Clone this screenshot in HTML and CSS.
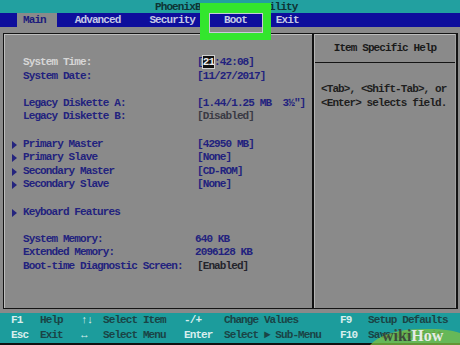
FILE: index.html
```html
<!DOCTYPE html>
<html>

<head>
    <title>PhoenixBIOS Setup Utility</title>
    <link rel="stylesheet" href="styles.css">
</head>

<body>
    <div class="title">PhoenixBIOS Setup Utility</div>

    <div class="menu">
        <span class="tab active">Main</span>
        <span class="tab">Advanced</span>
        <span class="tab">Security</span>
        <span class="tab">Boot</span>
        <span class="tab">Exit</span>
    </div>

    <div class="screen">
        <div class="panel">
            <div class="settings">
                <div class="row">
                    <span class="mark"></span>
                    <span class="label light">System Time:</span>
                    <span class="value">[<span class="cursor">21</span>:42:08]</span>
                </div>
                <div class="row">
                    <span class="mark"></span>
                    <span class="label">System Date:</span>
                    <span class="value">[11/27/2017]</span>
                </div>
                <div class="blank"></div>
                <div class="row">
                    <span class="mark"></span>
                    <span class="label">Legacy Diskette A:</span>
                    <span class="value">[1.44/1.25 MB&nbsp; 3½"]</span>
                </div>
                <div class="row">
                    <span class="mark"></span>
                    <span class="label">Legacy Diskette B:</span>
                    <span class="value dim">[Disabled]</span>
                </div>
                <div class="blank"></div>
                <div class="row">
                    <span class="mark sub"></span>
                    <span class="label">Primary Master</span>
                    <span class="value">[42950 MB]</span>
                </div>
                <div class="row">
                    <span class="mark sub"></span>
                    <span class="label">Primary Slave</span>
                    <span class="value">[None]</span>
                </div>
                <div class="row">
                    <span class="mark sub"></span>
                    <span class="label">Secondary Master</span>
                    <span class="value">[CD-ROM]</span>
                </div>
                <div class="row">
                    <span class="mark sub"></span>
                    <span class="label">Secondary Slave</span>
                    <span class="value">[None]</span>
                </div>
                <div class="blank"></div>
                <div class="row">
                    <span class="mark sub"></span>
                    <span class="label">Keyboard Features</span>
                    <span class="value"></span>
                </div>
                <div class="blank"></div>
                <div class="row">
                    <span class="mark"></span>
                    <span class="label">System Memory:</span>
                    <span class="value info">640 KB</span>
                </div>
                <div class="row">
                    <span class="mark"></span>
                    <span class="label">Extended Memory:</span>
                    <span class="value info">2096128 KB</span>
                </div>
                <div class="row">
                    <span class="mark"></span>
                    <span class="label">Boot-time Diagnostic Screen:</span>
                    <span class="value dark">[Enabled]</span>
                </div>
            </div>

            <div class="help">
                <div class="help-head">Item Specific Help</div>
                <div class="help-body">
                    &lt;Tab&gt;, &lt;Shift-Tab&gt;, or<br>
                    &lt;Enter&gt; selects field.
                </div>
            </div>
        </div>
    </div>

    <div class="footer">
        <span class="key">F1</span><span class="desc">Help</span>
        <span class="key">↑↓</span><span class="desc">Select Item</span>
        <span class="key">-/+</span><span class="desc">Change Values</span>
        <span class="key">F9</span><span class="desc">Setup Defaults</span>

        <span class="key">Esc</span><span class="desc">Exit</span>
        <span class="key">↔</span><span class="desc">Select Menu</span>
        <span class="key">Enter</span><span class="desc">Select ► Sub-Menu</span>
        <span class="key">F10</span><span class="desc">Save and Exit</span>
    </div>

    <!-- highlight drawn over the Boot tab -->
    <div class="highlight"></div>

    <div class="logo">
        <svg class="logo-bg" width="90" height="18" viewBox="0 0 90 18">
            <path d="M0 18 C10 7 30 1 60 2 C74 2 84 4 90 6 L90 18 Z" fill="#7fc241" opacity="0.75" />
        </svg>
        <span class="wiki">wiki</span><span class="how">How</span>
    </div>
</body>

</html>
```

FILE: styles.css
```css
body {
    margin: 0;
    width: 460px;
    height: 345px;
    overflow: hidden;
    position: relative;
    background: #8a8a8a;
    font-family: "Liberation Mono", "DejaVu Sans Mono", monospace;
    font-size: 11px;
    font-weight: bold;
    letter-spacing: -0.9px;
}

.title {
    height: 13px;
    line-height: 14px;
    background: #22a0a0;
    color: #0e3434;
    padding-left: 155px;
    white-space: pre;
}

.menu {
    height: 14px;
    line-height: 14px;
    background: #0e0e9c;
    display: flex;
    gap: 17px;
    padding-left: 17px;
}

.tab {
    color: #c4c8e4;
    padding: 0 6px;
}

.tab.active {
    background: #8a8a8a;
    color: #1c1c7c;
    padding-right: 11px;
    margin-right: -5px;
}

.screen {
    padding: 6px 2px 4px 3px;
}

.panel {
    height: 274px;
    display: flex;
    border: 1px solid #141414;
    border-right-width: 2px;
    box-shadow: inset 1px 1px 0 #bdbdbd;
}

.settings {
    width: 301px;
    padding: 22px 0 0 7px;
    border-right: 2px solid #111;
    line-height: 13.6px;
}

.row {
    display: flex;
    height: 13.6px;
    white-space: pre;
}

.blank {
    height: 13.6px;
}

.mark {
    width: 12px;
    position: relative;
}

.mark.sub::before {
    content: "";
    position: absolute;
    left: 1px;
    top: 3px;
    border-left: 5px solid #24247e;
    border-top: 4px solid transparent;
    border-bottom: 4px solid transparent;
}

.label {
    width: 174px;
    color: #22227e;
}

.label.light {
    color: #d6d6d6;
}

.value {
    color: #22227e;
}

.value.info {
    margin-left: -2px;
}

.value.dim {
    color: #3a3a44;
}

.value.dark {
    color: #24242c;
}

.cursor {
    background: #101010;
    color: #eeeeee;
    outline: 1px solid #d0d0d0;
}

.help {
    flex: 1;
    border-left: 1px solid #b4b4b4;
    border-right: 1px solid #a0a0a0;
}

.help-head {
    height: 28px;
    line-height: 28px;
    text-align: center;
    color: #1a1a1a;
    border-bottom: 1px solid #141414;
}

.help-body {
    padding: 20px 0 0 6px;
    line-height: 13.6px;
    color: #1e1e1e;
}

.footer {
    height: 30px;
    background: #1c9c9c;
    border-bottom: 2px solid #101010;
    display: grid;
    grid-template-columns: 29px 41px 22px 81px 40px 116px 28px 1fr;
    grid-auto-rows: 15px;
    line-height: 15px;
    padding-left: 11px;
    white-space: pre;
}

.key {
    color: #d8eeee;
}

.desc {
    color: #1a4446;
}

.highlight {
    position: absolute;
    left: 200px;
    top: 3px;
    width: 54px;
    height: 20px;
    border-style: solid;
    border-color: #33e62e;
    border-width: 10px 8px 7px 9px;
    box-shadow: inset 0 0 0 1px #c8cad8;
}

.logo {
    position: absolute;
    right: 0;
    bottom: 0;
    width: 90px;
    height: 18px;
    font-family: "Liberation Serif", serif;
    font-size: 16px;
    font-weight: bold;
    letter-spacing: 0;
    line-height: 18px;
    padding-left: 12px;
    box-sizing: border-box;
}

.logo-bg {
    position: absolute;
    left: 0;
    top: 0;
}

.wiki {
    position: relative;
    color: #3c4a3c;
}

.how {
    position: relative;
    color: #e6ece6;
}
```
